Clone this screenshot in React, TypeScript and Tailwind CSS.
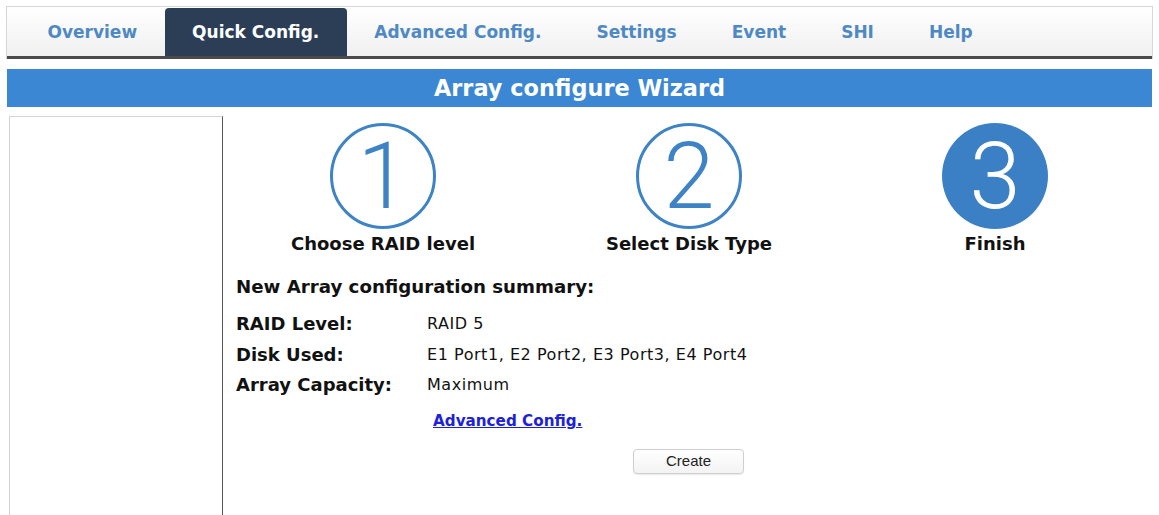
import React from 'react';

const tabs = ['Overview', 'Quick Config.', 'Advanced Config.', 'Settings', 'Event', 'SHI', 'Help'];

function StepCircle({ n, filled }: { n: number; filled?: boolean }) {
  return (
    <div
      className={`w-[106px] h-[106px] rounded-full flex items-center justify-center ${
        filled ? 'bg-[#3b80c5] text-white' : 'border-[3px] border-[#3d83c6] text-[#3d83c6] bg-white'
      }`}
    >
      <span className="font-['Roboto'] font-light text-[92px] leading-none mt-[2px]">{n}</span>
    </div>
  );
}

export default function App() {
  const steps = [
    { n: 1, label: 'Choose RAID level' },
    { n: 2, label: 'Select Disk Type' },
    { n: 3, label: 'Finish', filled: true },
  ];

  return (
    <div className="w-[1159px] h-[515px] bg-white overflow-hidden flex flex-col font-['DejaVu_Sans',sans-serif]">
      {/* Tab bar */}
      <div className="mt-[6px] mx-[6px] h-[53px] border border-b-0 border-[#d6d6d6] bg-gradient-to-b from-white to-[#efefef] flex flex-col">
        <div className="flex-1 flex items-end pl-[13px]">
          {tabs.map((t) => (
            <div
              key={t}
              className={`h-[48px] px-[27.5px] pt-[2px] flex items-center text-[17px] font-bold ${
                t === 'Quick Config.' ? 'bg-[#2b3e56] text-white rounded-t-[4px]' : 'text-[#4f89c3]'
              }`}
            >
              {t}
            </div>
          ))}
        </div>
        <div className="h-[3px] bg-[#4a4a4a]" />
      </div>

      {/* Wizard title */}
      <div className="mt-[10px] mx-[7px] h-[38px] bg-[#3b87d4] flex items-center justify-center">
        <span className="text-white font-bold text-[22.4px] mt-[2px]">Array configure Wizard</span>
      </div>

      <div className="mt-[9px] flex flex-1">
        <div className="ml-[9px] w-[214px] border-t border-l border-[#d4d4d4] border-r border-r-[#555]" />

        <div className="flex-1 pl-[7px]">
          {/* Steps */}
          <div className="flex mt-[7px]">
            {steps.map((s) => (
              <div key={s.n} className="w-[306px] flex flex-col items-center">
                <StepCircle n={s.n} filled={s.filled} />
                <div className="mt-[4px] text-[18px] font-bold text-[#111] leading-[22px]">{s.label}</div>
              </div>
            ))}
          </div>

          {/* Summary */}
          <div className="pl-[6px] mt-[21px]">
            <div className="text-[18.2px] font-bold text-[#111] leading-[22px]">New Array configuration summary:</div>
            <div className="mt-[15px] grid grid-cols-[191px_1fr] gap-y-[8.5px] text-[#111] leading-[22px]">
              <div className="text-[18px] font-bold">RAID Level:</div>
              <div className="text-[16px] tracking-[0.55px]">RAID 5</div>
              <div className="text-[18px] font-bold">Disk Used:</div>
              <div className="text-[16px] tracking-[0.55px]">E1 Port1, E2 Port2, E3 Port3, E4 Port4</div>
              <div className="text-[18px] font-bold">Array Capacity:</div>
              <div className="text-[16px] tracking-[0.55px]">Maximum</div>
            </div>
            <div className="mt-[13px] ml-[197px]">
              <a href="#" className="text-[15.2px] font-bold text-[#1c22d8] underline leading-[22px]">
                Advanced Config.
              </a>
            </div>
            <div className="mt-[16px] ml-[397px]">
              <button className="w-[111px] h-[25px] rounded-[4px] border border-[#cfcfcf] bg-gradient-to-b from-white to-[#f3f3f3] shadow-[0_1px_1px_rgba(0,0,0,0.08)] text-[15px] font-['Liberation_Sans',sans-serif] text-[#222]">
                Create
              </button>
            </div>
          </div>
        </div>
      </div>
    </div>
  );
}
